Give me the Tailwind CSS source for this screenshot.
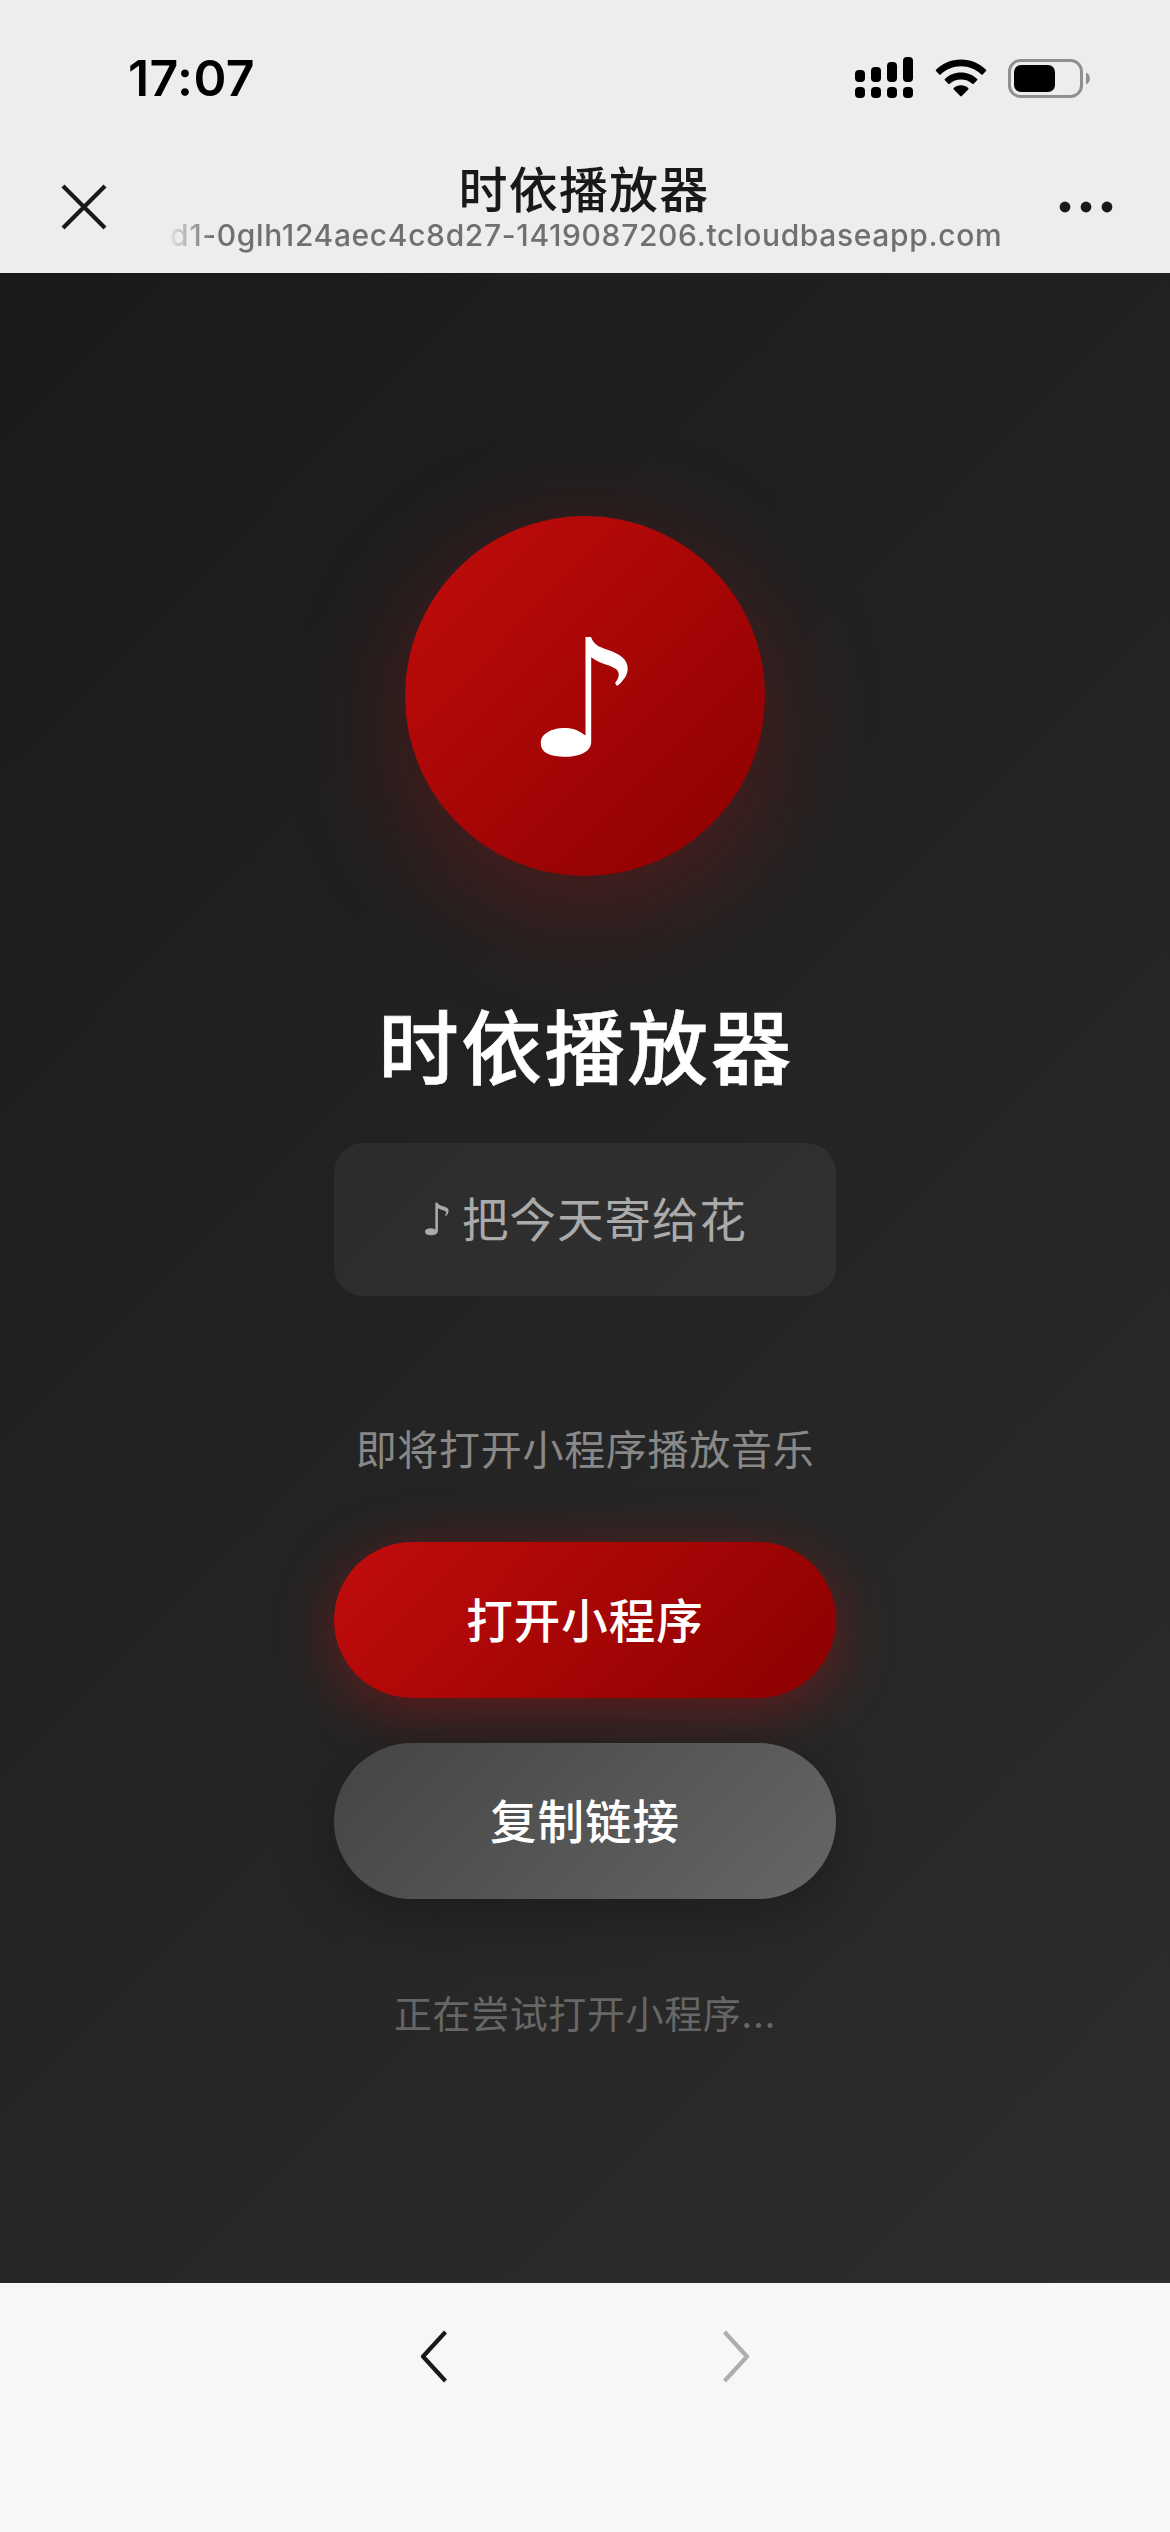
<!DOCTYPE html>
<html lang="zh-CN">
<head>
<meta charset="utf-8">
<title>时依播放器</title>
<script src="https://cdn.jsdelivr.net/npm/@tailwindcss/browser@4"></script>
</head>
<body class="w-[1170px] h-[2532px] overflow-hidden flex flex-col bg-[#f7f7f7] font-['Inter','Noto_Sans_CJK_SC',sans-serif]">
  <header class="h-[273px] shrink-0 bg-[#ededed] flex flex-col">
    <div class="h-[156px] flex justify-between items-center pl-[128px] pr-[79px]">
      <div class="text-[50px] leading-[50px] font-semibold text-black tracking-[0.4px]">17:07</div>
      <div class="flex items-center">
        <svg class="w-[58px] h-[42px]" viewBox="856 57 58 42">
          <g fill="#000">
            <rect x="856" y="70" width="10" height="12" rx="4"/><rect x="872" y="67" width="10" height="15" rx="4"/><rect x="888" y="62" width="10" height="20" rx="4"/><rect x="904" y="57" width="10" height="25" rx="4"/>
            <rect x="856" y="87" width="10" height="11" rx="4"/><rect x="872" y="87" width="10" height="11" rx="4"/><rect x="888" y="87" width="10" height="11" rx="4"/><rect x="904" y="87" width="10" height="11" rx="4"/>
          </g>
        </svg>
        <svg class="w-[52px] h-[38px] ml-[22px]" viewBox="0 0 52 38">
          <path d="M26 .5C36 .5 44.600 4.400 51 10.700Q51.700 11.400 51 12.100L47.700 15.500Q47 16.200 46.300 15.500C40.800 10.300 33.800 7.300 26 7.300S11.200 10.300 5.700 15.500Q5 16.200 4.300 15.500L1 12.100Q.300 11.400 1 10.700C7.400 4.400 16 .5 26 .5Z"/>
          <path d="M26 13.500C32.300 13.500 37.900 15.900 42.100 19.900Q42.900 20.600 42.100 21.300L38.700 24.700Q38 25.400 37.300 24.700C34.300 21.900 30.400 20.400 26 20.400S17.700 21.900 14.700 24.700Q14 25.400 13.300 24.700L9.900 21.300Q9.100 20.600 9.900 19.900C14.100 15.900 19.700 13.500 26 13.500Z"/>
          <path d="M26 26.300C28.900 26.300 31.300 27.300 33.200 28.900Q34 29.600 33.200 30.400L26.800 37Q26 37.800 25.200 37L18.800 30.400Q18 29.600 18.800 28.900C20.700 27.300 23.100 26.300 26 26.300Z"/>
        </svg>
        <svg class="w-[83px] h-[39px] ml-[21px]" viewBox="1009 58 83 39">
          <rect x="1010.500" y="59.500" width="72" height="36" rx="11" fill="none" stroke="#8f8f8f" stroke-width="3"/>
          <rect x="1015" y="64" width="41" height="27" rx="7"/>
          <path d="M1087 71.500C1092.200 73.500 1092.200 81.500 1087 83.500Z" fill="#8f8f8f"/>
        </svg>
      </div>
    </div>
    <div class="flex-1 flex justify-between pl-[61px] pr-[57px]">
      <svg class="w-[46px] h-[46px] mt-[28px]" viewBox="0 0 46 46"><path d="M2 2L44 44M44 2L2 44" stroke="#191919" stroke-width="4.200"/></svg>
      <div class="flex flex-col items-center w-[840px]">
        <h1 class="text-[49px] leading-[68px] font-medium text-[#191919] tracking-[1.2px] pl-[2px] mt-px">时依播放器</h1>
        <div class="w-[834px] pl-[4px] text-[30px] leading-[40px] h-[44px] mt-[-10px] whitespace-nowrap font-medium text-[#707070] tracking-[0.65px] text-center mask-[linear-gradient(to_right,transparent,black_46px)]">d1-0glh124aec4c8d27-1419087206.tcloudbaseapp.com</div>
      </div>
      <svg class="w-[54px] h-[12px] mt-[45px]" viewBox="0 0 54 12"><g fill="#191919"><circle cx="6" cy="6" r="5.400"/><circle cx="27" cy="6" r="5.400"/><circle cx="48" cy="6" r="5.400"/></g></svg>
    </div>
  </header>

  <main class="h-[2010px] shrink-0 flex flex-col items-center bg-[linear-gradient(135deg,#1a1a1a,#2d2d2d)] pt-[243px]">
    <div class="size-[360px] shrink-0 rounded-full bg-[linear-gradient(135deg,#c20c0c,#8b0000)] shadow-[0_30px_120px_rgba(194,12,12,0.3)] flex items-center justify-center">
      <svg class="w-[90px] h-[122px] mt-[2px]" viewBox="0 0 90 122">
        <path fill="#fff" d="M45.500 1H51C53 6 55.500 9 61 11.300C69 14.600 76 16 82.500 21.500C90 28 88.500 38 83.500 43.500C81.500 46 80 48 77.500 49.700Q75.500 49.500 75.200 46.700C79 42 80.500 37 76 33C71 29 60 28 51.200 21.200V106C51.200 114.500 41.500 120.700 26 120.700C10 120.700 .8 117 .8 107C.8 98 11 92 25 92C34.500 91.600 40.500 96 45.500 99.500Z"/>
      </svg>
    </div>
    <h2 class="mt-[112px] h-[122px] leading-[122px] pl-[2px] text-[80.500px] tracking-[2.600px] [-webkit-text-stroke:0.6px_white] font-medium text-white">时依播放器</h2>
    <div class="mt-[33px] w-[502px] h-[153px] rounded-[30px] bg-white/5 flex items-center justify-center text-[46.500px] tracking-[1px] leading-[60px] text-[#aaa]"><span class="font-['DejaVu_Sans'] text-[44px] mr-[10px] scale-x-115">♪</span><span>把今天寄给花</span></div>
    <p class="mt-[124px] h-[60px] leading-[60px] text-[41px] tracking-[0.700px] text-[#888]">即将打开小程序播放音乐</p>
    <button class="mt-[62px] w-[502px] h-[156px] shrink-0 rounded-full bg-[linear-gradient(135deg,#c20c0c,#8b0000)] shadow-[0_12px_60px_rgba(194,12,12,0.4)] text-white text-[46.500px] tracking-[1px] pt-[3px] font-medium">打开小程序</button>
    <button class="mt-[45px] w-[502px] h-[156px] shrink-0 rounded-full bg-[linear-gradient(135deg,#444,#666)] shadow-[0_12px_60px_rgba(0,0,0,0.3)] text-white text-[46.500px] tracking-[1px] pt-[3px] font-medium">复制链接</button>
    <p class="mt-[85px] h-[60px] leading-[60px] text-[38px] tracking-[0.600px] text-[#666]">正在尝试打开小程序...</p>
  </main>

  <nav class="flex-1 flex justify-center gap-[276px] pt-[47px]">
    <svg class="w-[27px] h-[53px]" viewBox="0 0 27 53"><path d="M25.500 2L3 26.500L25.500 51" fill="none" stroke="#191919" stroke-width="4.200" stroke-linejoin="round"/></svg>
    <svg class="w-[27px] h-[53px]" viewBox="0 0 27 53"><path d="M1.500 2L24 26.500L1.500 51" fill="none" stroke="#aeaeae" stroke-width="4.200" stroke-linejoin="round"/></svg>
  </nav>
</body>
</html>
